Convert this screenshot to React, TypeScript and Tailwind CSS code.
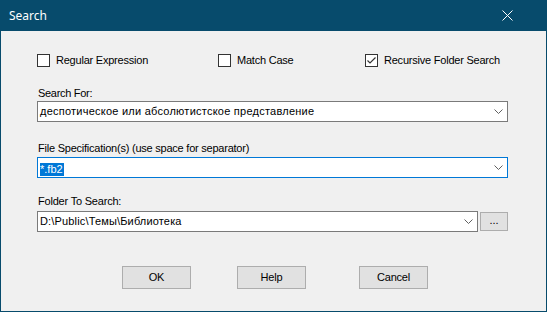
import React from "react";

const font = { fontFamily: '"Liberation Sans", Arial, sans-serif' };

function Chevron() {
  return (
    <svg width="9" height="5" viewBox="0 0 9 5" className="shrink-0">
      <path d="M0.5 0.5 L4.5 4.5 L8.5 0.5" fill="none" stroke="#606060" strokeWidth="1" />
    </svg>
  );
}

function CheckBox({ checked, label }: { checked?: boolean; label: string }) {
  return (
    <div className="flex items-center h-[13px]">
      <div className="w-[13px] h-[13px] border border-[#333333] bg-white flex items-center justify-center shrink-0">
        {checked && (
          <svg width="11" height="11" viewBox="0 0 11 11">
            <path d="M1.5 5.5 L4 8 L9.5 2.5" fill="none" stroke="#333333" strokeWidth="1.2" />
          </svg>
        )}
      </div>
      <span className="ml-[6px] text-[11px] leading-[13px] tracking-[-0.22px] text-black whitespace-nowrap">
        {label}
      </span>
    </div>
  );
}

function Button({ label, className }: { label: string; className?: string }) {
  return (
    <div
      className={
        "w-[69px] h-[23px] bg-[#e1e1e1] border border-[#adadad] flex items-center justify-center text-[11px] tracking-[-0.2px] text-black " +
        (className || "")
      }
    >
      {label}
    </div>
  );
}

export default function App() {
  return (
    <div className="w-[547px] h-[312px] flex flex-col overflow-hidden" style={font}>
      <div className="h-[31px] bg-[#074b6c] flex items-center justify-between shrink-0">
        <span
          className="ml-[9px] text-white text-[12px]"
          style={{ fontFamily: '"Noto Sans", "Open Sans", sans-serif' }}
        >
          Search
        </span>
        <svg width="11" height="11" viewBox="0 0 11 11" className="mr-[34px]">
          <path d="M0.5 0.5 L10.5 10.5 M10.5 0.5 L0.5 10.5" stroke="white" strokeWidth="1" />
        </svg>
      </div>
      <div className="flex-1 bg-[#f0f0f0] border-x border-b border-[#074b6c] pl-[36px] flex flex-col">
        <div className="flex mt-[23px]">
          <div className="w-[181px]">
            <CheckBox label="Regular Expression" />
          </div>
          <div className="w-[147px]">
            <CheckBox label="Match Case" />
          </div>
          <div>
            <CheckBox checked label="Recursive Folder Search" />
          </div>
        </div>

        <div className="mt-[20px] ml-[1px] text-[11px] leading-[13px] tracking-[-0.3px] text-black">Search For:</div>
        <div className="mt-[1px] w-[471px] h-[21px] bg-white border border-[#7a7a7a] flex items-center pl-[2px] pr-[4px]">
          <span className="flex-1 text-[11px] tracking-[0.24px] text-black whitespace-nowrap">
            деспотическое или абсолютистское представление
          </span>
          <Chevron />
        </div>

        <div className="mt-[20px] ml-[1px] text-[11px] leading-[13px] tracking-[-0.23px] text-black">
          File Specification(s) (use space for separator)
        </div>
        <div className="mt-[2px] w-[471px] h-[21px] bg-white border border-[#0078d7] flex items-center pl-[2px] pr-[4px]">
          <div className="flex-1">
            <span className="bg-[#0078d7] text-white text-[11px] leading-[13px] inline-block pr-[1px]">*.fb2</span>
          </div>
          <Chevron />
        </div>

        <div className="mt-[17px] ml-[1px] text-[11px] leading-[13px] tracking-[-0.2px] text-black">Folder To Search:</div>
        <div className="mt-[3px] flex items-center">
          <div className="w-[441px] h-[21px] bg-white border border-[#7a7a7a] flex items-center pl-[2px] pr-[4px]">
            <span className="flex-1 text-[11px] tracking-[0.16px] text-black whitespace-nowrap">
              D:\Public\Темы\Библиотека
            </span>
            <Chevron />
          </div>
          <div className="ml-[2px] w-[28px] h-[19px] bg-[#e1e1e1] border border-[#adadad] flex items-center justify-center text-[11px] text-black leading-none pb-[2px]">
            ...
          </div>
        </div>

        <div className="mt-[34px] flex">
          <Button label="OK" className="ml-[85px]" />
          <Button label="Help" className="ml-[46px]" />
          <Button label="Cancel" className="ml-[53px]" />
        </div>
      </div>
    </div>
  );
}
